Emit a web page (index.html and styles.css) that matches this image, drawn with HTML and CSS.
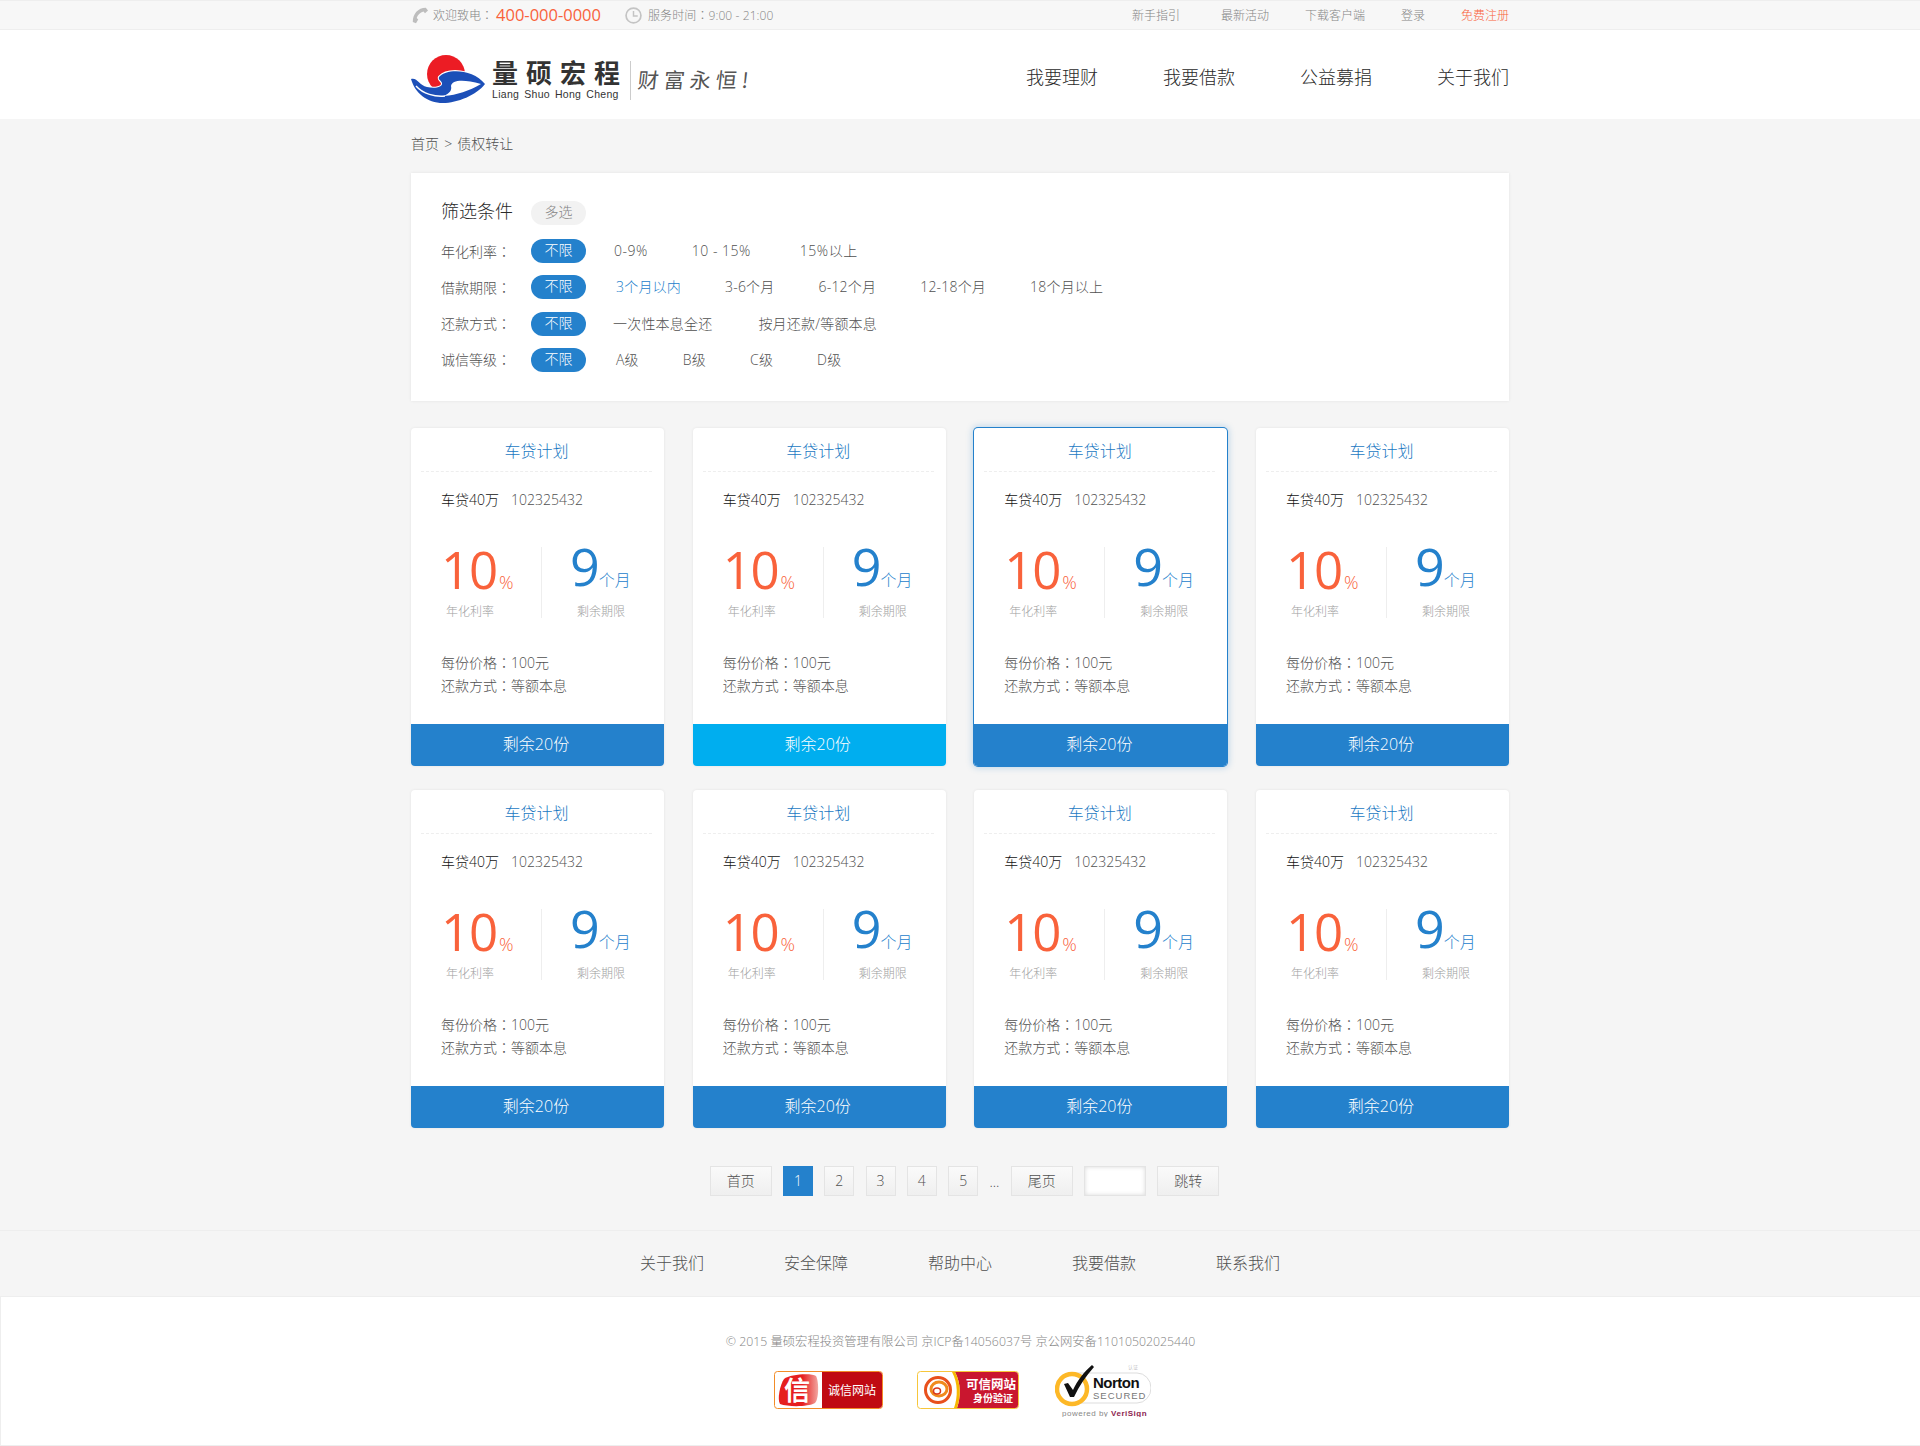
FILE: index.html
```html
<!DOCTYPE html>
<html lang="zh-CN">
<head>
<meta charset="utf-8">
<title>债权转让</title>
<link rel="stylesheet" href="styles.css">
</head>
<body>
<div class="topbar"><div class="wrap topbar-in">
  <svg class="ico-phone" viewBox="0 0 17 17"><path d="M16 3.500L13.800 .8C6 .8 .8 7 .8 15L4 16.300L6.200 12.500L4.700 11C5.700 8 8 5.700 11.500 4.600L13 6.200Z" fill="#bdbdbd"/></svg>
  <span class="tb-txt">欢迎致电<span class="co">：</span></span>
  <span class="tb-phone">400-000-0000</span>
  <svg class="ico-clock" viewBox="0 0 16 16"><circle cx="8" cy="8" r="7" fill="none" stroke="#c4c4c4" stroke-width="1.600"/><path d="M8 3.800V8.500H12" fill="none" stroke="#c4c4c4" stroke-width="1.400"/></svg>
  <span class="tb-txt tb-time">服务时间<span class="co">：</span>9:00 - 21:00</span>
  <div class="tb-links">
    <a class="tb-first">新手指引</a><a>最新活动</a><a>下载客户端</a><a>登录</a><a class="tb-reg">免费注册</a>
  </div>
</div></div>

<header class="header"><div class="wrap header-in">
  <div class="logo">
    <svg class="logo-mark" viewBox="0 0 76 50">
      <circle cx="35" cy="19" r="19" fill="#ec1c24"/>
      <path d="M0 24C6 22 8 30 16 32C24 34 32 32 31 28C30 25 27 25 28 22C36 13 62 14 74 29C66 40 46 48 32 48C16 48 4 38 0 24Z" fill="#1c4fb8" stroke="#fff" stroke-width="2.200" paint-order="stroke"/>
      <path d="M40 31C41 25 52 24 70 29C58 36 46 40 33 41C39 38 41 35 40 31Z" fill="#fff"/>
      <path d="M5 31C12 39 24 42 34 41" fill="none" stroke="#fff" stroke-width="1.400"/>
    </svg>
    <div class="logo-name">
      <div class="logo-cn">量硕宏程</div>
      <div class="logo-en">Liang Shuo Hong Cheng</div>
    </div>
    <div class="logo-slogan">财富永恒!</div>
  </div>
  <nav class="nav"><a>我要理财</a><a>我要借款</a><a>公益募捐</a><a>关于我们</a></nav>
</div></header>

<div class="wrap">
  <div class="crumb">首页 &gt; 债权转让</div>

  <section class="filter">
    <div class="f-head"><span class="f-title">筛选条件</span><span class="f-multi">多选</span></div>
    <div class="f-row r1"><span class="f-label">年化利率<span class="co">：</span></span><span class="pill">不限</span><a>0-9%</a><a>10 - 15%</a><a>15%以上</a></div>
    <div class="f-row r2"><span class="f-label">借款期限<span class="co">：</span></span><span class="pill">不限</span><a class="on">3个月以内</a><a>3-6个月</a><a>6-12个月</a><a>12-18个月</a><a>18个月以上</a></div>
    <div class="f-row r3"><span class="f-label">还款方式<span class="co">：</span></span><span class="pill">不限</span><a>一次性本息全还</a><a>按月还款/等额本息</a></div>
    <div class="f-row r4"><span class="f-label">诚信等级<span class="co">：</span></span><span class="pill">不限</span><a>A级</a><a>B级</a><a>C级</a><a>D级</a></div>
  </section>

  <section class="cards">
    <article class="card">
      <h3 class="c-title">车贷计划</h3>
      <div class="c-name"><b>车贷40万</b><span>102325432</span></div>
      <div class="c-stats">
        <div class="s-rate"><div class="s-num rate">10<small>%</small></div><div class="s-lab">年化利率</div></div>
        <div class="s-term"><div class="s-num term">9<small>个月</small></div><div class="s-lab">剩余期限</div></div>
      </div>
      <div class="c-info"><p>每份价格<span class="co">：</span>100元</p><p>还款方式<span class="co">：</span>等额本息</p></div>
      <div class="c-btn">剩余20份</div>
    </article>
    <article class="card alt">
      <h3 class="c-title">车贷计划</h3>
      <div class="c-name"><b>车贷40万</b><span>102325432</span></div>
      <div class="c-stats">
        <div class="s-rate"><div class="s-num rate">10<small>%</small></div><div class="s-lab">年化利率</div></div>
        <div class="s-term"><div class="s-num term">9<small>个月</small></div><div class="s-lab">剩余期限</div></div>
      </div>
      <div class="c-info"><p>每份价格<span class="co">：</span>100元</p><p>还款方式<span class="co">：</span>等额本息</p></div>
      <div class="c-btn">剩余20份</div>
    </article>
    <article class="card active">
      <h3 class="c-title">车贷计划</h3>
      <div class="c-name"><b>车贷40万</b><span>102325432</span></div>
      <div class="c-stats">
        <div class="s-rate"><div class="s-num rate">10<small>%</small></div><div class="s-lab">年化利率</div></div>
        <div class="s-term"><div class="s-num term">9<small>个月</small></div><div class="s-lab">剩余期限</div></div>
      </div>
      <div class="c-info"><p>每份价格<span class="co">：</span>100元</p><p>还款方式<span class="co">：</span>等额本息</p></div>
      <div class="c-btn">剩余20份</div>
    </article>
    <article class="card">
      <h3 class="c-title">车贷计划</h3>
      <div class="c-name"><b>车贷40万</b><span>102325432</span></div>
      <div class="c-stats">
        <div class="s-rate"><div class="s-num rate">10<small>%</small></div><div class="s-lab">年化利率</div></div>
        <div class="s-term"><div class="s-num term">9<small>个月</small></div><div class="s-lab">剩余期限</div></div>
      </div>
      <div class="c-info"><p>每份价格<span class="co">：</span>100元</p><p>还款方式<span class="co">：</span>等额本息</p></div>
      <div class="c-btn">剩余20份</div>
    </article>
    <article class="card">
      <h3 class="c-title">车贷计划</h3>
      <div class="c-name"><b>车贷40万</b><span>102325432</span></div>
      <div class="c-stats">
        <div class="s-rate"><div class="s-num rate">10<small>%</small></div><div class="s-lab">年化利率</div></div>
        <div class="s-term"><div class="s-num term">9<small>个月</small></div><div class="s-lab">剩余期限</div></div>
      </div>
      <div class="c-info"><p>每份价格<span class="co">：</span>100元</p><p>还款方式<span class="co">：</span>等额本息</p></div>
      <div class="c-btn">剩余20份</div>
    </article>
    <article class="card">
      <h3 class="c-title">车贷计划</h3>
      <div class="c-name"><b>车贷40万</b><span>102325432</span></div>
      <div class="c-stats">
        <div class="s-rate"><div class="s-num rate">10<small>%</small></div><div class="s-lab">年化利率</div></div>
        <div class="s-term"><div class="s-num term">9<small>个月</small></div><div class="s-lab">剩余期限</div></div>
      </div>
      <div class="c-info"><p>每份价格<span class="co">：</span>100元</p><p>还款方式<span class="co">：</span>等额本息</p></div>
      <div class="c-btn">剩余20份</div>
    </article>
    <article class="card">
      <h3 class="c-title">车贷计划</h3>
      <div class="c-name"><b>车贷40万</b><span>102325432</span></div>
      <div class="c-stats">
        <div class="s-rate"><div class="s-num rate">10<small>%</small></div><div class="s-lab">年化利率</div></div>
        <div class="s-term"><div class="s-num term">9<small>个月</small></div><div class="s-lab">剩余期限</div></div>
      </div>
      <div class="c-info"><p>每份价格<span class="co">：</span>100元</p><p>还款方式<span class="co">：</span>等额本息</p></div>
      <div class="c-btn">剩余20份</div>
    </article>
    <article class="card">
      <h3 class="c-title">车贷计划</h3>
      <div class="c-name"><b>车贷40万</b><span>102325432</span></div>
      <div class="c-stats">
        <div class="s-rate"><div class="s-num rate">10<small>%</small></div><div class="s-lab">年化利率</div></div>
        <div class="s-term"><div class="s-num term">9<small>个月</small></div><div class="s-lab">剩余期限</div></div>
      </div>
      <div class="c-info"><p>每份价格<span class="co">：</span>100元</p><p>还款方式<span class="co">：</span>等额本息</p></div>
      <div class="c-btn">剩余20份</div>
    </article>
  </section>

  <div class="pager">
    <a class="pg wide">首页</a><a class="pg cur">1</a><a class="pg">2</a><a class="pg">3</a><a class="pg">4</a><a class="pg">5</a><span class="dots">...</span><a class="pg wide">尾页</a><span class="pg-input"></span><a class="pg wide">跳转</a>
  </div>
</div>

<footer>
  <div class="f-nav"><a>关于我们</a><a>安全保障</a><a>帮助中心</a><a>我要借款</a><a>联系我们</a></div>
  <div class="f-main">
    <div class="copy">© 2015 量硕宏程投资管理有限公司 京ICP备14056037号 京公网安备11010502025440</div>
    <div class="badges">
      <svg class="b1" viewBox="0 0 109 38">
        <defs><linearGradient id="b1g" x1="0" x2="1" y1="0" y2="0"><stop offset=".6" stop-color="#e61f1f"/><stop offset="1" stop-color="#f2a6a0"/></linearGradient></defs>
        <rect x=".5" y=".5" width="108" height="37" rx="3" fill="#fff" stroke="#f28c28"/>
        <path d="M48 1H105a3 3 0 0 1 3 3V34a3 3 0 0 1-3 3H48Z" fill="#c00a12"/>
        <path d="M10 8C16 3 38 2 42 5C45 10 45 28 41 32C34 36 14 36 6 33C3 28 6 14 10 8Z" fill="url(#b1g)"/>
        <text x="23" y="29" class="b1-big">信</text>
        <text x="54" y="24" class="b1-txt">诚信网站</text>
      </svg>
      <svg class="b2" viewBox="0 0 102 38">
        <rect x=".5" y=".5" width="101" height="37" rx="3" fill="#fff" stroke="#f7c63b"/>
        <path d="M38 1H98a3 3 0 0 1 3 3V34a3 3 0 0 1-3 3H40C44 26 44 12 38 1Z" fill="#c9162f"/>
        <path d="M35 1C41 12 41 26 37 37H40C44 26 44 12 38 1Z" fill="#f6b800"/>
        <circle cx="21" cy="19" r="12.500" fill="none" stroke="#e8501c" stroke-width="3"/>
        <ellipse cx="22" cy="18" rx="8" ry="7" fill="none" stroke="#f08a1d" stroke-width="3"/>
        <ellipse cx="20" cy="20" rx="3.500" ry="3" fill="none" stroke="#d9381e" stroke-width="1.500"/>
        <text x="49" y="18" class="b2-a">可信网站</text>
        <text x="56" y="31" class="b2-b">身份验证</text>
      </svg>
      <svg class="b3" viewBox="0 0 96 53">
        <path d="M20 9H82a14 15 0 0 1 14 15V24a14 15 0 0 1-14 15H20Z" fill="#fff" stroke="#ddd" stroke-width="1"/>
        <circle cx="17" cy="25" r="15" fill="#fff" stroke="#fdb827" stroke-width="4.500"/>
        <path d="M9 20L13 19L18 26C22 17 29 8 37 1L39 3C31 12 24 22 19 33H15Z" fill="#111"/>
        <text x="73" y="5" class="b3-c">认证</text>
        <text x="38" y="24" class="b3-n">Norton</text>
        <text x="38" y="35" class="b3-s">SECURED</text>
        <text x="7" y="52" class="b3-p">powered by <tspan class="b3-v">VeriSign</tspan></text>
      </svg>
    </div>
  </div>
</footer>
</body>
</html>
```
FILE: styles.css
```css
* { box-sizing: border-box; }
html, body { margin: 0; padding: 0; }
body {
  background: #f5f5f5;
  color: #505050;
  font-family: "Open Sans", "Noto Sans CJK SC", sans-serif;
  font-size: 14px;
  font-weight: 300;
}
p, h3 { margin: 0; font-weight: inherit; }
.wrap { width: 1098px; margin: 0 auto; }
.co { font-family: "Noto Sans CJK TC", sans-serif; font-feature-settings: "locl" 0; }

.topbar { height: 30px; background: #f7f7f7; border-top: 1px solid #eee; border-bottom: 1px solid #eee; }
.topbar-in { display: flex; align-items: center; height: 28px; font-size: 12px; color: #858585; }
.ico-phone { width: 17px; height: 17px; margin-left: 1px; margin-right: 4px; }
.tb-phone { font-size: 16.500px; font-weight: 400; color: #f9623b; margin-left: 3px; margin-top: -1px; }
.ico-clock { width: 17px; height: 17px; margin-left: 24px; margin-right: 6px; }
.tb-time { letter-spacing: .1px; }
.tb-links { margin-left: auto; display: flex; gap: 36px; }
.tb-first { margin-right: 5px; }
.tb-reg { color: #f9623b; }

.header { background: #fff; height: 89px; }
.header-in { display: flex; align-items: center; justify-content: space-between; height: 100%; }
.logo { display: flex; align-items: center; margin-top: 4px; }
.logo-mark { width: 76px; height: 50px; margin-top: 7px; }
.logo-name { margin-left: 5px; margin-top: 8px; width: 139px; height: 39px; border-right: 1px solid #ccc; color: #333; font-family: "Noto Sans CJK SC", sans-serif; }
.logo-cn { font-size: 26px; font-weight: 700; letter-spacing: 8px; line-height: 27px; margin-top: -3px; white-space: nowrap; }
.logo-en { font-family: "Liberation Sans", sans-serif; font-size: 10.500px; font-weight: 400; word-spacing: 1.800px; letter-spacing: .3px; line-height: 12px; margin-top: 3px; white-space: nowrap; }
.logo-slogan { margin-left: 7px; margin-top: 4px; font-size: 21px; font-weight: 400; letter-spacing: 5px; color: #555; font-family: "Noto Sans CJK SC", sans-serif; transform: skewX(-6deg); }
.nav { display: flex; gap: 65px; font-size: 18px; color: #2a2a2a; line-height: 24px; margin-top: 4px; }

.crumb { height: 54px; line-height: 50px; font-size: 14px; word-spacing: 1.500px; }

.filter { height: 228px; background: #fff; padding: 28px 30px 0; box-shadow: 0 0 3px rgba(0,0,0,.08); }
.f-head { display: flex; align-items: center; height: 24px; margin-bottom: 14px; }
.f-title { width: 90px; font-size: 18px; color: #2a2a2a; line-height: 20px; margin-top: -5px; }
.f-multi { width: 55px; height: 24px; line-height: 22px; border-radius: 12px; background: #f2f2f2; color: #858585; text-align: center; }
.f-row { display: flex; align-items: center; height: 24px; margin-bottom: 12.330px; line-height: 22px; }
.f-label { width: 90px; }
.pill { width: 55px; height: 24px; line-height: 22px; border-radius: 12px; background: #2481cc; color: #fff; text-align: center; margin-right: 8px; }
.f-row a { padding: 0 22px; letter-spacing: .2px; }
.f-row .on { color: #2481cc; }
.r1 .pill { margin-right: 6px; }
.r1 a { letter-spacing: .5px; }
.r1 a:last-child { margin-left: 5px; }
.r3 .pill { margin-right: 5px; }
.r3 a { padding: 0 24px 0 22px; }

.cards { display: grid; grid-template-columns: repeat(4, 253px); justify-content: space-between; row-gap: 24px; margin-top: 27px; }
.card { height: 338px; background: #fff; border-radius: 4px; overflow: hidden; display: flex; flex-direction: column; box-shadow: 0 0 3px rgba(0,0,0,.08); }
.card.active { box-shadow: 0 0 0 1px #2481cc, 0 0 6px 2px rgba(36,129,204,.25); }
.c-title { margin: 0 12px 0 10px; height: 44px; padding-top: 1px; line-height: 44px; border-bottom: 1px dashed #eee; color: #1a78c2; font-size: 16px; text-align: center; flex: none; }
.c-name { height: 56px; padding: 17px 0 0 30px; line-height: 22px; flex: none; }
.c-name b { font-weight: 300; color: #111; margin-right: 12px; }
.c-stats { display: flex; height: 71px; margin-top: 19px; padding-left: 30px; flex: none; }
.s-rate { width: 101px; border-right: 1px solid #eee; }
.s-term { padding-left: 30px; }
.s-num { font-weight: 400; line-height: 50px; height: 50px; white-space: nowrap; }
.rate { font-size: 51px; letter-spacing: -1.200px; color: #f9623b; margin-top: -3px; }
.rate small { font-size: 18px; font-weight: 300; letter-spacing: 0; margin-left: 2px; }
.term { font-size: 52px; color: #2481cc; margin-top: -6px; margin-left: -2px; }
.term small { font-size: 16px; font-weight: 300; margin-left: -1px; }
.s-lab { font-size: 12px; color: #a0a0a0; padding-left: 5px; margin-top: 10px; line-height: 16px; }
.s-term .s-lab { margin-top: 13px; }
.c-info { margin-top: 33px; padding-left: 30px; line-height: 22px; flex: none; }
.c-btn { margin-top: auto; height: 42px; line-height: 40px; background: #2481cc; color: #fff; font-size: 16px; text-align: center; padding-right: 3px; flex: none; }
.alt .c-btn { background: #00aeef; }

.pager { display: flex; justify-content: center; align-items: center; gap: 11.300px; margin-top: 38px; margin-bottom: 34px; padding-left: 9px; height: 30px; }
.pg { width: 30px; height: 30px; line-height: 28px; text-align: center; border: 1px solid #e4e4e4; background: linear-gradient(#fafafa, #efefef); font-size: 14px; }
.pg.wide { width: 62px; }
.pg.cur { background: #2481cc; border-color: #2481cc; color: #fff; }
.dots { width: 10px; text-align: center; }
.pg-input { width: 62px; height: 30px; background: #fff; border: 1px solid #e4e4e4; box-shadow: inset 0 0 4px rgba(0,0,0,.15); }

.f-nav { height: 67px; border-top: 1px solid #eee; border-bottom: 1px solid #eee; display: flex; justify-content: center; align-items: center; gap: 80px; font-size: 16px; line-height: 20px; padding-bottom: 1px; }
.f-main { height: 149px; background: #fff; border-bottom: 1px solid #eee; border-left: 1px solid #eee; padding-top: 35px; text-align: center; }
.copy { font-size: 12.300px; color: #858585; line-height: 20px; }
.badges { display: flex; justify-content: center; align-items: flex-start; margin-top: 10px; padding-left: 4px; }
.b1 { width: 109px; height: 38px; margin-top: 9px; }
.b2 { width: 102px; height: 38px; margin: 9px 36px 0 34px; }
.b3 { width: 96px; height: 53px; margin-top: 2px; }
.badges text { font-family: "Noto Sans CJK SC", sans-serif; }
.b1-big { font-size: 26px; font-weight: 700; fill: #fff; text-anchor: middle; }
.b1-txt { font-size: 12px; font-weight: 400; fill: #fff; }
.b2-a { font-size: 12.500px; font-weight: 700; fill: #fff; }
.b2-b { font-size: 10px; font-weight: 700; fill: #fff; }
.b3-c { font-size: 5px; fill: #aaa; }
.badges .b3-n { font-family: "Liberation Sans", sans-serif; font-size: 15px; font-weight: 700; letter-spacing: -.5px; fill: #111; }
.badges .b3-s { font-family: "Liberation Sans", sans-serif; font-size: 9.500px; font-weight: 400; letter-spacing: 1px; fill: #777; }
.badges .b3-p { font-family: "Liberation Sans", sans-serif; font-size: 8px; font-weight: 400; letter-spacing: .5px; fill: #888; }
.b3-v { fill: #8c1d4f; font-weight: 700; }
```
